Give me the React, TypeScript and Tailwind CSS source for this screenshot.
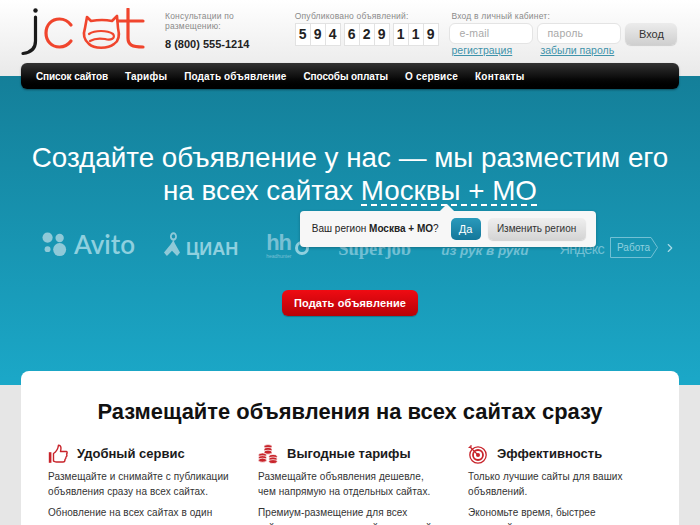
import { ChevronRight } from "lucide-react";

const DIGITS = [
  ["5", "9", "4"],
  ["6", "2", "9"],
  ["1", "1", "9"],
];

const NAV = [
  { label: "Список сайтов", className: "tracking-[-0.1px]" },
  { label: "Тарифы", className: "tracking-[0.2px]" },
  { label: "Подать объявление", className: "tracking-[0.15px]" },
  { label: "Способы оплаты", className: "tracking-[-0.1px]" },
  { label: "О сервисе", className: "tracking-[0.2px]" },
  { label: "Контакты", className: "tracking-[0.3px]" },
];

function Logo() {
  return (
    <svg width="124" height="48" viewBox="0 0 124 48" fill="none" className="shrink-0">
      <circle cx="14.5" cy="2.5" r="2.2" fill="#1a1a1a" />
      <path d="M14.5 9V33C14.5 41 10 44.5 2 45.5" stroke="#1a1a1a" strokeWidth="3.2" strokeLinecap="round" />
      <path d="M50 17C47 13 43 11 38.5 11C30.5 11 25 17 25 25C25 33 30.5 39 38.5 39C43 39 47 37 50 33" stroke="#f0452d" strokeWidth="3.2" strokeLinecap="round" />
      <path d="M66 9L70 13C76 12 86 12 91 13L96 8L97 20C99 28 98 33 93 36C87 41 73 41 68 36C63 32 62 26 64 20Z" stroke="#f0452d" strokeWidth="2.6" strokeLinejoin="round" />
      <path d="M68 26C74 22 86 22 92 26C95 30 90 33 84 31C78 30 74 30 69 33" stroke="#f0452d" strokeWidth="2.2" strokeLinecap="round" />
      <path d="M107 1V30C107 37 111 39 122 39" stroke="#f0452d" strokeWidth="3.2" strokeLinecap="round" />
      <path d="M97 13H122" stroke="#f0452d" strokeWidth="3.2" strokeLinecap="round" />
    </svg>
  );
}

function Digit({ value }: { value: string }) {
  return (
    <span className="flex-1 h-[21px] flex items-center justify-center bg-white border-r border-[#e2e2e2] last:border-r-0 text-[14px] font-bold text-[#222]">
      {value}
    </span>
  );
}

function ThumbIcon() {
  return (
    <svg width="20" height="20" viewBox="0 0 20 20" fill="none" stroke="#c8242b" strokeWidth="1.4" strokeLinejoin="round">
      <rect x="0.8" y="8.2" width="2.6" height="10.6" fill="#c8242b" stroke="none" />
      <path d="M5.5 9.5C8 8 10 5 10.5 1.2C12.8 1 13.5 3.5 12.5 7.5H18.2C19.3 7.5 19.4 9 18.6 10C19 11 18.8 12.5 18 13C18 14.2 17.6 15 17 15.4C17 17 16.3 18 15 18H8.5C7 18 6.2 17.2 5.5 17Z" />
    </svg>
  );
}

function CoinsIcon() {
  return (
    <svg width="20" height="20" viewBox="0 0 20 20" fill="#c8242b" stroke="#fff" strokeWidth="0.7">
      <ellipse cx="10" cy="2.6" rx="4" ry="2" />
      <ellipse cx="10" cy="5.4" rx="4" ry="2" />
      <ellipse cx="10" cy="8.2" rx="4" ry="2" />
      <ellipse cx="4.5" cy="11" rx="4" ry="2" />
      <ellipse cx="4.5" cy="13.6" rx="4" ry="2" />
      <ellipse cx="4.5" cy="16.2" rx="4" ry="2" />
      <ellipse cx="15" cy="12.4" rx="4.2" ry="2" />
      <ellipse cx="15" cy="15" rx="4.2" ry="2" />
      <ellipse cx="15" cy="17.6" rx="4.2" ry="2" />
    </svg>
  );
}

function TargetIcon() {
  return (
    <svg width="20" height="20" viewBox="0 0 20 20" fill="none" stroke="#c8242b">
      <circle cx="10" cy="11" r="8.2" strokeWidth="1.3" />
      <circle cx="10" cy="11" r="5" strokeWidth="1.8" />
      <circle cx="10" cy="11" r="2" fill="#c8242b" stroke="none" />
      <path d="M10 11L1.5 2.5M0.5 3.5H3V1" strokeWidth="1.1" />
    </svg>
  );
}

function Feature({ icon, title, lines }: { icon: React.ReactNode; title: string; lines: string[] }) {
  return (
    <div className="w-[186px] shrink-0">
      <div className="flex items-center gap-[9px] h-[22px]">
        {icon}
        <h3 className="text-[13px] font-bold text-[#1a1a1a]">{title}</h3>
      </div>
      {lines.map((text) => (
        <p key={text} className="mt-[6px] first-of-type:mt-[4px] text-[10px] leading-[15px] tracking-[0.07px] text-[#333] whitespace-pre-line">
          {text}
        </p>
      ))}
    </div>
  );
}

export default function App() {
  return (
    <div className="w-[700px] h-[525px] overflow-hidden bg-[#e6e6e6] font-['Liberation_Sans',Arial,sans-serif]">
      {/* Header */}
      <header className="h-[76px] px-[21px] pt-[8px] flex bg-gradient-to-b from-white to-[#e9e9e9]">
        <Logo />
        <div className="ml-[20px] w-[130px] pt-[3px]">
          <p className="w-[90px] text-[8.5px] leading-[10px] tracking-[0.2px] text-[#8a8a8a]">
            Консультации по размещению:
          </p>
          <p className="mt-[6px] text-[11px] leading-[14px] font-bold text-[#222]">8 (800) 555-1214</p>
        </div>
        <div className="w-[155px] pt-[3px]">
          <p className="text-[8.5px] leading-[10px] tracking-[0.2px] text-[#8a8a8a]">Опубликовано объявлений:</p>
          <div className="mt-[2px] flex gap-[3px]">
            {DIGITS.map((group) => (
              <div key={group.join("")} className="w-[46px] flex border border-[#e2e2e2] bg-white">
                {group.map((d, i) => (
                  <Digit key={i} value={d} />
                ))}
              </div>
            ))}
          </div>
        </div>
        <div className="w-[230px] pt-[3px]">
          <p className="ml-[2px] text-[8.5px] leading-[10px] tracking-[0.2px] text-[#8a8a8a]">Вход в личный кабинет:</p>
          <div className="mt-[2px] h-[21px] flex items-start gap-[4px]">
            <div className="w-[84px] h-[21px] rounded-[6px] bg-white border border-[#e4e4e4] pl-[9px] text-[10.5px] leading-[19px] tracking-[0.2px] text-[#a8a8a8]">
              e-mail
            </div>
            <div className="w-[84px] h-[21px] rounded-[6px] bg-white border border-[#e4e4e4] pl-[9px] text-[10.5px] leading-[19px] tracking-[0.2px] text-[#a8a8a8]">
              пароль
            </div>
            <button className="w-[52px] h-[22px] rounded-[6px] bg-gradient-to-b from-[#ececec] to-[#cfcfcf] shadow-[0_1px_1px_rgba(0,0,0,0.15)] text-[11px] text-[#333]">
              Вход
            </button>
          </div>
          <div className="flex text-[10.5px] leading-[13px] text-[#3f93ab] underline">
            <a className="ml-[2px] w-[89px]">регистрация</a>
            <a>забыли пароль</a>
          </div>
        </div>
      </header>

      {/* Hero */}
      <section className="h-[309px] flow-root bg-gradient-to-b from-[#147f99] to-[#1ba8c8]">
        <nav className="mx-[21px] -mt-[13px] h-[26px] relative flex items-center gap-[17px] pl-[15px] rounded-[6px] bg-gradient-to-b from-[#333] via-[#111] to-black shadow-[0_1px_2px_rgba(0,0,0,0.4)]">
          {NAV.map((item) => (
            <a key={item.label} className={`text-[10px] font-bold text-white ${item.className}`}>
              {item.label}
            </a>
          ))}
        </nav>

        <h1 className="mt-[52px] text-center text-[27.8px] leading-[33px] text-white">
          Создайте объявление у нас — мы разместим его
          <br />
          на всех сайтах{" "}
          <span className="relative inline-block leading-[27px] border-b-2 border-dashed border-white">
            Москвы + МО
            {/* Region popover */}
            <span className="absolute left-[-61px] top-[34px] z-10 w-[296px] h-[36px] flex items-center pl-[12px] rounded-[4px] bg-[#f7f7f7] shadow-[0_1px_3px_rgba(0,0,0,0.25)] text-[10px] leading-[14px] text-[#222] whitespace-nowrap">
              <span className="absolute left-[142px] -top-[5px] w-[10px] h-[10px] rotate-45 bg-[#f7f7f7]" />
              <span>
                Ваш регион <b>Москва + МО</b>?
              </span>
              <span className="ml-[12px] w-[30px] h-[22px] flex items-center justify-center rounded-[5px] bg-gradient-to-b from-[#2a9abb] to-[#13779a] text-white text-[11px]">
                Да
              </span>
              <span className="ml-[7px] w-[98px] h-[22px] flex items-center justify-center rounded-[5px] bg-gradient-to-b from-[#efefef] to-[#d4d4d4] shadow-[0_1px_1px_rgba(0,0,0,0.15)] text-[10px] text-[#333]">
                Изменить регион
              </span>
            </span>
          </span>
        </h1>

        {/* Partner logos */}
        <div className="mt-[25px] ml-[42px] h-[32px] flex items-center text-[#8fd0df] whitespace-nowrap">
          <svg width="26" height="25" viewBox="0 0 28 26" fill="#8fc9d8" className="shrink-0 -mt-[8px]">
            <circle cx="6" cy="5.5" r="5.5" />
            <circle cx="19" cy="6" r="4.5" />
            <circle cx="6" cy="18" r="3.2" />
            <circle cx="19" cy="18.5" r="7" />
          </svg>
          <span className="ml-[6px] -mt-[8px] text-[26px] font-['Lato',sans-serif] font-semibold">Avito</span>
          <svg width="16" height="25" viewBox="0 0 22 28" fill="none" preserveAspectRatio="none" className="ml-[29px] -mt-[8px] shrink-0">
            <circle cx="13" cy="5" r="3.6" stroke="#8fc9d8" strokeWidth="2.4" />
            <path d="M13 9L9 14L0 23L4 27L11 21L18 27L22 23L15 13Z" fill="#8fc9d8" />
          </svg>
          <span className="ml-[6px] mt-[2px] text-[18px] font-bold">ЦИАН</span>
          <span className="ml-[28px] -mt-[4px] flex flex-col w-[30px]">
            <span className="text-[22px] leading-[20px] font-bold text-[#78c0d4] tracking-[-1px]">hh</span>
            <span className="text-[5px] leading-[6px] text-[#78c0d4]">headhunter</span>
          </span>
          <span className="ml-[-1px] w-[14px] h-[14px] rounded-full border-[3px] border-[#8fd0df]" />
          <span className="ml-[29px] mt-[3px] text-[18.5px] font-['Liberation_Serif',serif] font-bold text-[#72c0d4]">Superjob</span>
          <span className="ml-[30px] mt-[6px] text-[13.5px] font-bold italic text-[#72c0d4]">из рук в руки</span>
          <span className="ml-[31px] mt-[3px] text-[14.5px] tracking-[-0.7px] text-[#72c0d4]">Яндекс</span>
          <span className="relative ml-[6px] w-[48px] h-[21px] flex items-center pl-[7px] mt-[-1px] text-[10px] text-[#8fd0df]">
            <svg width="48" height="21" viewBox="0 0 48 21" fill="none" className="absolute left-0 top-0">
              <path d="M0.5 0.5H41L47.5 10.5L41 20.5H0.5Z" stroke="#72c0d4" />
            </svg>
            Работа
          </span>
          <ChevronRight size={14} className="ml-[5px] text-[#a9dbe7]" />
        </div>

        <button className="block mx-auto mt-[26px] w-[136px] h-[26px] rounded-[6px] bg-gradient-to-b from-[#ef0c13] to-[#b80207] shadow-[0_1px_1px_rgba(0,0,0,0.25)] text-[11px] font-bold tracking-[0.15px] text-white">
          Подать объявление
        </button>
      </section>

      {/* Features card */}
      <main className="relative mx-[21px] -mt-[14px] h-[300px] rounded-t-[8px] bg-white px-[27px] pt-[28px]">
        <h2 className="text-center text-[21.9px] leading-[26px] font-bold text-[#111]">
          Размещайте объявления на всех сайтах сразу
        </h2>
        <div className="mt-[18px] flex gap-[24px]">
          <Feature
            icon={<ThumbIcon />}
            title="Удобный сервис"
            lines={["Размещайте и снимайте с публикации\nобъявления сразу на всех сайтах.", "Обновление на всех сайтах в один\nклик."]}
          />
          <Feature
            icon={<CoinsIcon />}
            title="Выгодные тарифы"
            lines={["Размещайте объявления дешевле,\nчем напрямую на отдельных сайтах.", "Премиум-размещение для всех\nсайтов с дополнительной экономией."]}
          />
          <Feature
            icon={<TargetIcon />}
            title="Эффективность"
            lines={["Только лучшие сайты для ваших\nобъявлений.", "Экономьте время, быстрее\nпродавайте товары и услуги."]}
          />
        </div>
      </main>
    </div>
  );
}
